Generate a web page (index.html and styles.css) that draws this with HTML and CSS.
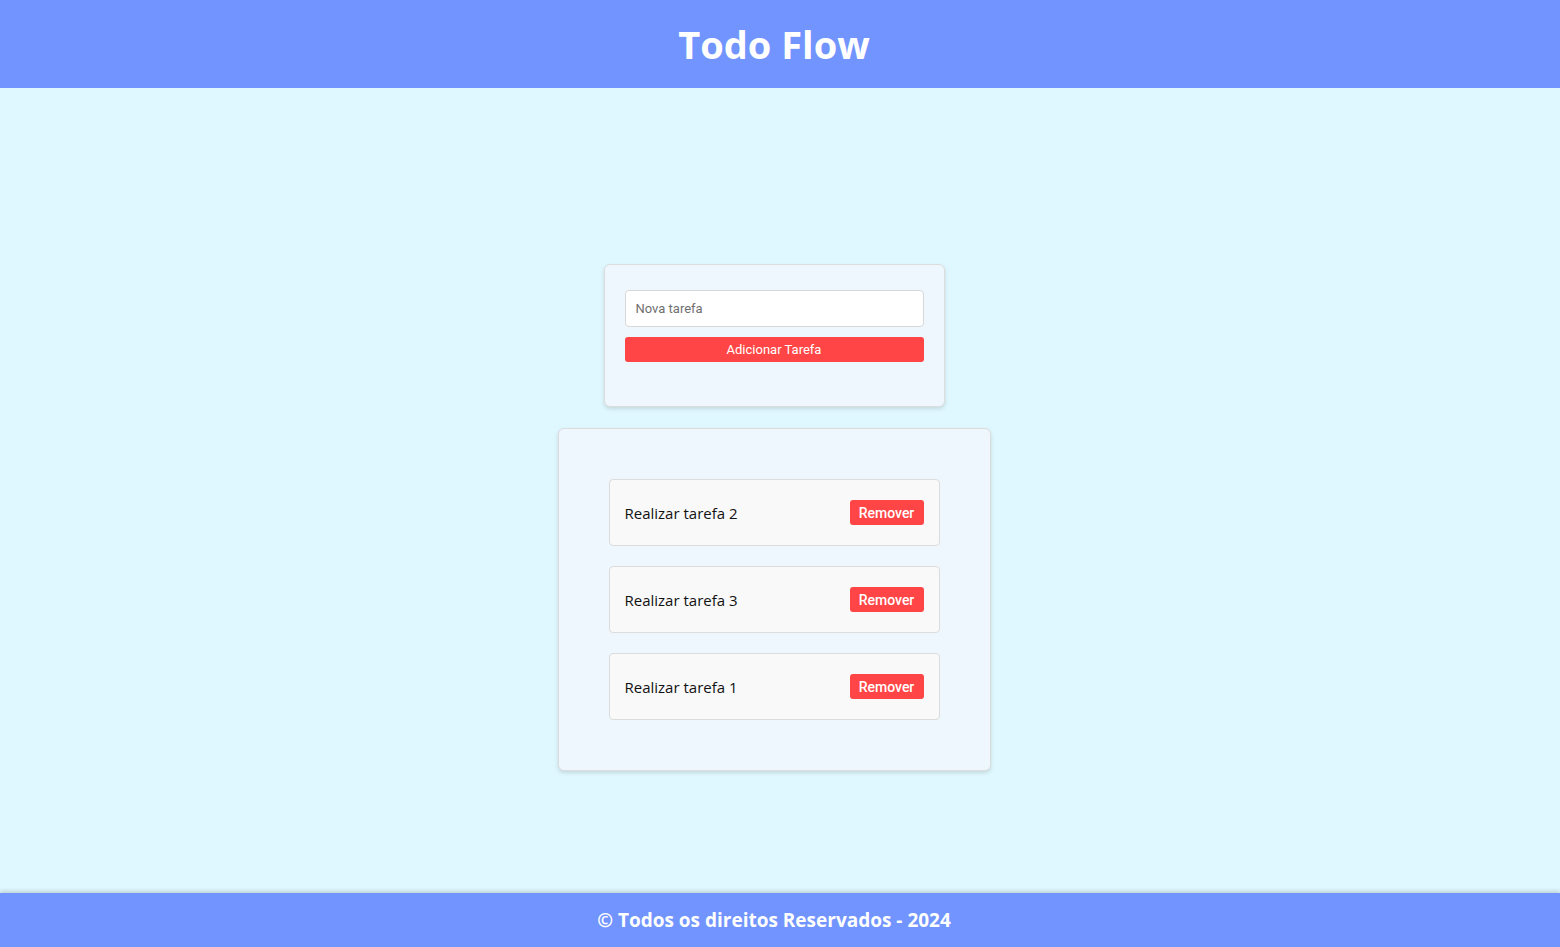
FILE: index.html
```html
<!DOCTYPE html>
<html lang="pt-BR">
<head>
<meta charset="utf-8">
<title>Todo Flow</title>
<link rel="stylesheet" href="styles.css">
</head>
<body>
<header class="header"><h1 class="title">Todo Flow</h1></header>
<main class="main">
  <form class="card form-card">
    <input class="task-input" type="text" placeholder="Nova tarefa">
    <button class="add-btn" type="button">Adicionar Tarefa</button>
  </form>
  <section class="card list-card">
    <div class="item"><span class="item-text">Realizar tarefa 2</span><button class="remove-btn" type="button">Remover</button></div>
    <div class="item"><span class="item-text">Realizar tarefa 3</span><button class="remove-btn" type="button">Remover</button></div>
    <div class="item"><span class="item-text">Realizar tarefa 1</span><button class="remove-btn" type="button">Remover</button></div>
  </section>
</main>
<footer class="footer">© Todos os direitos Reservados - 2024</footer>
</body>
</html>
```
FILE: styles.css
```css
* { box-sizing: border-box; }
html, body { margin: 0; padding: 0; }
body {
  min-height: 100vh;
  display: flex;
  flex-direction: column;
  background: #dff7fe;
  font-family: "Open Sans", "Noto Sans", sans-serif;
}
.header {
  height: 88px;
  background: #7194fe;
  display: flex;
  align-items: center;
  justify-content: center;
  padding-right: 12px;
}
.title {
  margin: 0;
  color: #fff;
  font-size: 38px;
  font-weight: 700;
}
.main {
  flex: 1;
  display: flex;
  flex-direction: column;
  align-items: center;
  padding-top: 176px;
  padding-right: 12px;
}
.card {
  background: #eff7fe;
  border: 1px solid #dcdcdc;
  border-radius: 6px;
  box-shadow: 0 2px 4px rgba(0,0,0,0.12);
}
.form-card {
  width: 341px;
  height: 143px;
  padding: 25px 20px;
  display: flex;
  flex-direction: column;
  gap: 10px;
}
.task-input {
  height: 37px;
  width: 100%;
  border: 1px solid #d8d8d8;
  border-radius: 4px;
  background: #fff;
  padding: 0 10px;
  font-family: Roboto, sans-serif;
  font-size: 13px;
  color: #333;
  outline: none;
}
.task-input::placeholder { color: #6f6f6f; }
.add-btn {
  height: 25px;
  width: 100%;
  border: none;
  border-radius: 3px;
  background: #ff4545;
  color: #fff;
  font-family: Roboto, sans-serif;
  font-size: 13px;
  cursor: pointer;
}
.list-card {
  margin-top: 21px;
  width: 433px;
  padding: 50px;
  display: flex;
  flex-direction: column;
  gap: 20px;
}
.item {
  height: 67px;
  background: #f9f9f9;
  border: 1px solid #dcdcdc;
  border-radius: 4px;
  padding: 0 15px;
  display: flex;
  align-items: center;
  justify-content: space-between;
}
.item-text {
  font-family: "Open Sans", "Noto Sans", sans-serif;
  font-size: 15px;
  color: #111;
}
.remove-btn {
  height: 25px;
  width: 74px;
  border: none;
  border-radius: 3px;
  background: #ff4545;
  color: #fff;
  font-family: Roboto, sans-serif;
  font-size: 14px;
  font-weight: 500;
  cursor: pointer;
}
.footer {
  height: 54px;
  background: #7194fe;
  color: #fff;
  font-weight: 700;
  font-size: 19px;
  display: flex;
  align-items: center;
  justify-content: center;
  padding-right: 12px;
  box-shadow: 0 -2px 4px rgba(0,0,0,0.15);
}
```
